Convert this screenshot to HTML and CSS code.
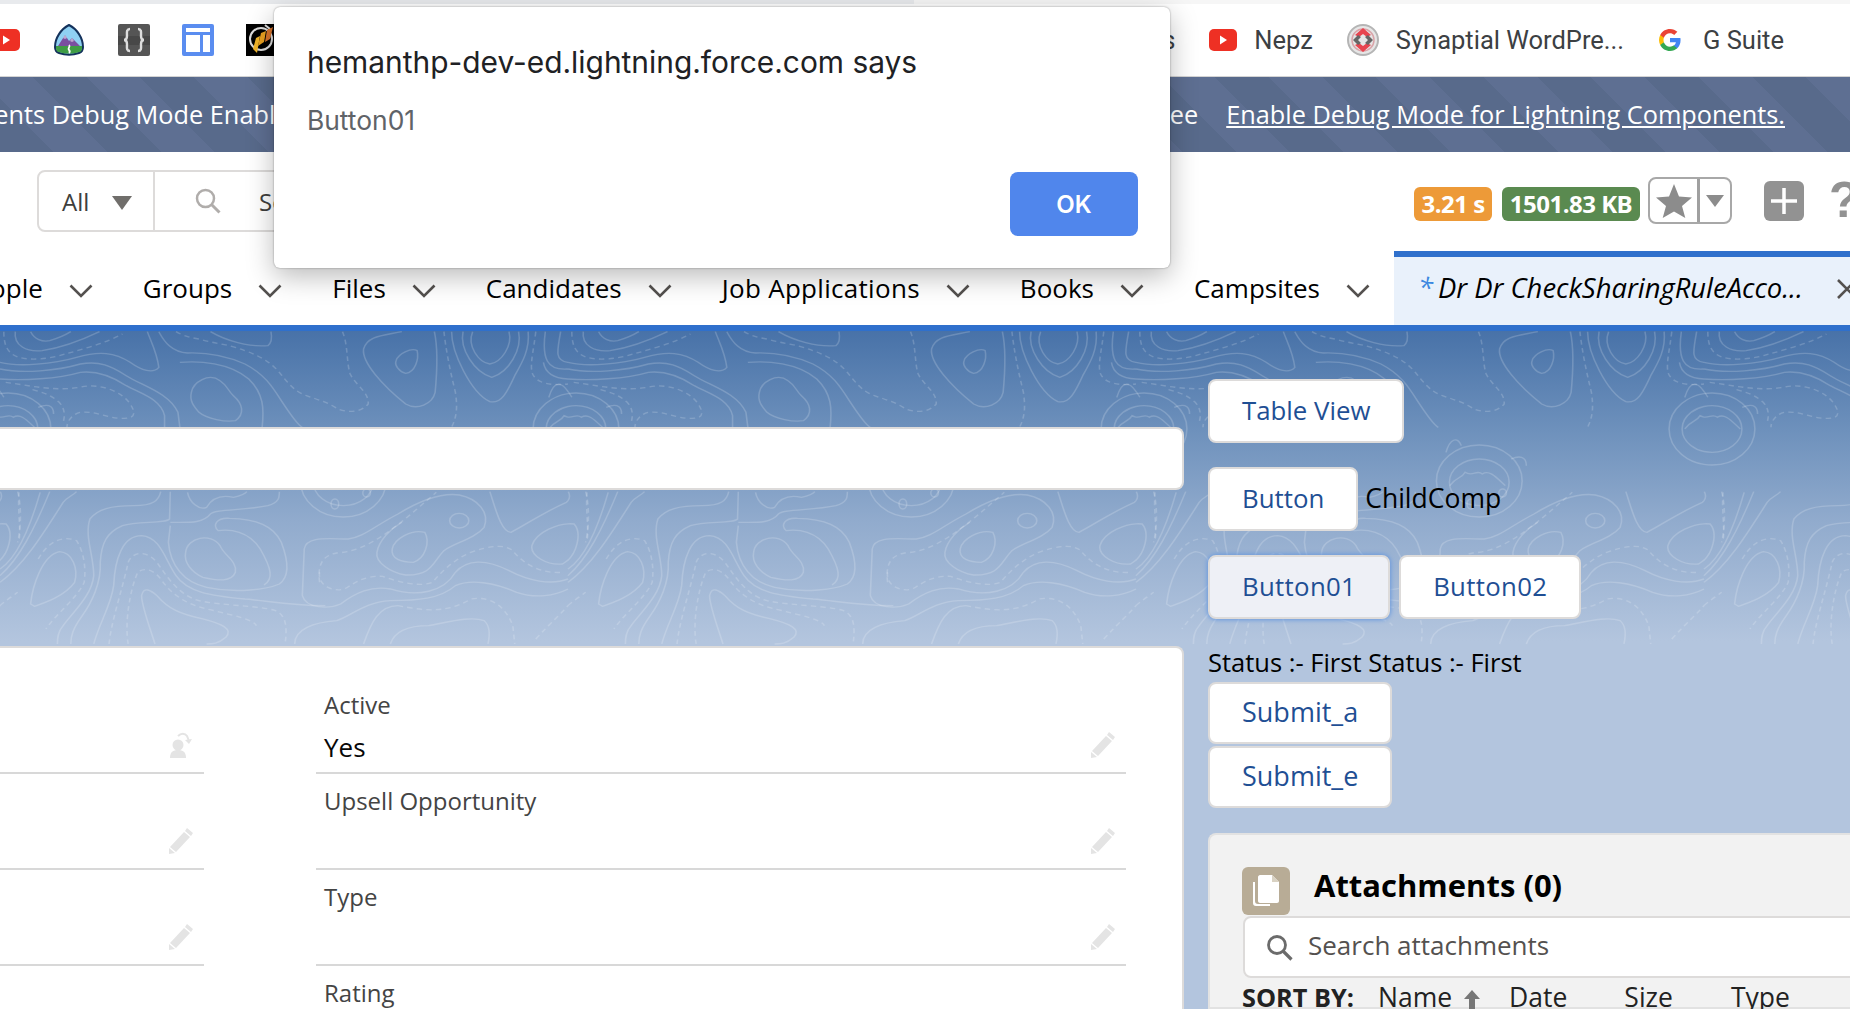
FILE: index.html
```html
<!DOCTYPE html>
<html>
<head>
<meta charset="utf-8">
<title>Lightning</title>
<link rel="stylesheet" href="styles.css">
</head>
<body>

<div class="tabstrip"><div class="tabstrip-on"></div></div>

<div class="bookmarks">
  <div class="bm-left">
    <svg class="ic-yt-cut" width="28" height="22" viewBox="0 0 28 22"><rect width="28" height="22" rx="5" fill="#ee3024"/><path d="M11 6.5l7 4.500-7 4.500z" fill="#fff"/></svg>
    <svg width="30" height="32" viewBox="0 0 30 32"><path d="M15 1C7 5 1 14 1 23c0 3 1 5 4 6 6 2 14 2 20 0 3-1 4-3 4-6C29 14 23 5 15 1z" fill="#8fd0f3" stroke="#14325c" stroke-width="2"/><path d="M4 22l7-11 4 6 3-3 8 8z" fill="#7a4fa0"/><path d="M11 11l2 3-2 1-2-1zM18 14l2 3-2 1-2-1z" fill="#fff" opacity=".5"/><path d="M2 22h26v2c0 2-1 4-3 4-6 2-14 2-20 0-2 0-3-2-3-4z" fill="#3f9c45"/><path d="M15 21c2 2-2 3 0 5 1 1 1 2 0 3" fill="none" stroke="#fff" stroke-width="1.800"/></svg>
    <svg width="32" height="32" viewBox="0 0 32 32"><rect width="32" height="32" rx="2" fill="#555"/><path d="M0 12h32v9H0z" fill="#484848"/><path d="M12 5c-4 0-3 4-3 7 0 2-1 4-3 4 2 0 3 2 3 4 0 3-1 7 3 7M20 5c4 0 3 4 3 7 0 2 1 4 3 4-2 0-3 2-3 4 0 3 1 7-3 7" fill="none" stroke="#ddd" stroke-width="2.400"/></svg>
    <svg width="32" height="32" viewBox="0 0 32 32"><rect width="32" height="32" rx="2" fill="#5a8df0"/><path d="M4 4h24v4H4zM4 11h14v17H4zM21 11h7v17h-7z" fill="#fff"/></svg>
    <svg width="28" height="32" viewBox="0 0 28 32"><rect width="28" height="32" fill="#000"/><circle cx="15" cy="15" r="11" fill="none" stroke="#ddd" stroke-width="2"/><path d="M19 1l5 4" stroke="#ddd" stroke-width="2"/><path d="M7 25l3-11 4-2-3 17z" fill="#f0b429"/><path d="M12 22l3-13 5-2-2 11z" fill="#e8a020"/><path d="M19 18l2-12 6-3-3 12z" fill="#d9742c"/></svg>
  </div>
  <div class="bm-right">
    <span class="bm-link">Apex Docs</span>
    <span class="bm-item">
      <svg width="28" height="22" viewBox="0 0 28 22"><rect width="28" height="22" rx="5" fill="#ee3024"/><path d="M11 6.500l7 4.500-7 4.500z" fill="#fff"/></svg>
      <span class="bm-link">Nepz</span>
    </span>
    <span class="bm-item">
      <svg width="32" height="32" viewBox="0 0 32 32"><circle cx="16" cy="16" r="15" fill="#e6e6e6" stroke="#b5b5b5" stroke-width="2"/><circle cx="16" cy="16" r="11" fill="none" stroke="#d9a3a8" stroke-width="1.500"/><path d="M8 11l8-7 8 7-4 2-4-3-4 3z" fill="#e8444f"/><path d="M8 21l8 7 8-7-4-2-4 3-4-3z" fill="#e8444f"/><path d="M6 16l5-5 3 2-3 3 3 3-3 2zM26 16l-5-5-3 2 3 3-3 3 3 2z" fill="#666"/></svg>
      <span class="bm-link">Synaptial WordPre...</span>
    </span>
    <span class="bm-item bm-item-g">
      <svg width="24" height="24" viewBox="0 0 48 48"><path fill="#4285F4" d="M45.100 24.500c0-1.600-.1-3.100-.4-4.500H24v8.500h11.800c-.5 2.800-2.100 5.100-4.400 6.700v5.500h7.100c4.200-3.800 6.600-9.500 6.600-16.200z"/><path fill="#34A853" d="M24 46c5.900 0 10.900-2 14.500-5.300l-7.100-5.500c-2 1.300-4.500 2.100-7.400 2.100-5.700 0-10.500-3.800-12.300-9H4.400v5.700C8 41.400 15.400 46 24 46z"/><path fill="#FBBC05" d="M11.700 28.300c-.4-1.300-.7-2.800-.7-4.300s.3-3 .7-4.300v-5.700H4.400C2.900 17 2 20.400 2 24s.9 7 2.400 10z"/><path fill="#EA4335" d="M24 10.700c3.200 0 6.100 1.100 8.400 3.300l6.300-6.300C34.900 4.200 29.900 2 24 2 15.400 2 8 6.600 4.400 14l7.300 5.700c1.800-5.200 6.600-9 12.300-9z"/></svg>
      <span class="bm-link">G Suite</span>
    </span>
  </div>
</div>

<div class="banner">
  <div class="banner-cut"><span>Lightning Components Debug Mode Enabled</span></div>
  <div class="banner-end">
    <span>To turn it off, see</span>
    <a class="banner-link">Enable Debug Mode for Lightning Components.</a>
  </div>
</div>

<div class="globalhead">
  <div class="searchbox">
    <div class="searchscope">
      <span>All</span>
      <svg width="20" height="14" viewBox="0 0 20 14"><path d="M0 0h20L10 14z" fill="#706e6b"/></svg>
    </div>
    <div class="searchfield">
      <svg width="26" height="26" viewBox="0 0 26 26"><circle cx="10.500" cy="10.500" r="8.500" fill="none" stroke="#b0adab" stroke-width="2.500"/><path d="M16.500 16.500l8 8" stroke="#b0adab" stroke-width="3"/></svg>
      <span>Search Salesforce</span>
    </div>
  </div>
  <div class="headtools">
    <span class="badge badge-time">3.21 s</span>
    <span class="badge badge-size">1501.83 KB</span>
    <div class="favs">
      <div class="favs-star"><svg width="36" height="34" viewBox="0 0 36 34"><path d="M18 0l5 12.500 13 1-10 8.500 3.300 12L18 27.500 6.700 34 10 22 0 13.500l13-1z" fill="#8c8c8c"/></svg></div>
      <div class="favs-drop"><svg width="18" height="12" viewBox="0 0 18 12"><path d="M0 0h18L9 12z" fill="#8c8c8c"/></svg></div>
    </div>
    <div class="addbtn"><svg width="28" height="28" viewBox="0 0 28 28"><path d="M14 1v26M1 14h26" stroke="#fff" stroke-width="3.500"/></svg></div>
    <span class="helpmark">?</span>
  </div>
</div>

<div class="navbar">
  <div class="navlist">
    <div class="navitem"><span>People</span><svg class="chev" width="24" height="14" viewBox="0 0 24 14"><path d="M1.500 1.500L12 12 22.500 1.500" fill="none" stroke="#54514f" stroke-width="2.600"/></svg></div>
    <div class="navitem"><span>Groups</span><svg class="chev" width="24" height="14" viewBox="0 0 24 14"><path d="M1.500 1.500L12 12 22.500 1.500" fill="none" stroke="#54514f" stroke-width="2.600"/></svg></div>
    <div class="navitem"><span>Files</span><svg class="chev" width="24" height="14" viewBox="0 0 24 14"><path d="M1.500 1.500L12 12 22.500 1.500" fill="none" stroke="#54514f" stroke-width="2.600"/></svg></div>
    <div class="navitem"><span>Candidates</span><svg class="chev" width="24" height="14" viewBox="0 0 24 14"><path d="M1.500 1.500L12 12 22.500 1.500" fill="none" stroke="#54514f" stroke-width="2.600"/></svg></div>
    <div class="navitem navitem-wide"><span>Job Applications</span><svg class="chev" width="24" height="14" viewBox="0 0 24 14"><path d="M1.500 1.500L12 12 22.500 1.500" fill="none" stroke="#54514f" stroke-width="2.600"/></svg></div>
    <div class="navitem"><span>Books</span><svg class="chev" width="24" height="14" viewBox="0 0 24 14"><path d="M1.500 1.500L12 12 22.500 1.500" fill="none" stroke="#54514f" stroke-width="2.600"/></svg></div>
    <div class="navitem"><span>Campsites</span><svg class="chev" width="24" height="14" viewBox="0 0 24 14"><path d="M1.500 1.500L12 12 22.500 1.500" fill="none" stroke="#54514f" stroke-width="2.600"/></svg></div>
  </div>
  <div class="navactive">
    <span class="navstar">*</span>
    <span class="navtitle">Dr Dr CheckSharingRuleAcco...</span>
    <svg class="navclose" width="22" height="22" viewBox="0 0 22 22"><path d="M2 2l18 18M20 2L2 20" stroke="#54514f" stroke-width="2.600"/></svg>
  </div>
</div>

<div class="workspace">
  <svg class="topo" width="1850" height="315" xmlns="http://www.w3.org/2000/svg">
    <defs>
      <g id="topo-lines" fill="none" stroke="#fff" stroke-opacity=".18" stroke-width="4">
        <g>
          <path d="M1035 95C1040 75 1075 55 1090 65C1095 90 1085 130 1060 133C1045 130 1030 110 1035 95Z"/>
          <path d="M1050 8C1000 20 960 20 950 60C945 100 1000 170 1060 225C1090 245 1130 225 1137 190C1142 130 1145 60 1135 8"/>
          <path d="M415 8C430 40 450 70 490 72C540 70 590 80 640 105C690 135 710 170 735 215C755 250 780 290 790 295"/>
          <path d="M550 8C590 35 650 55 700 50C712 40 710 20 708 8"/>
          <path d="M0 100C50 115 140 105 200 85C260 65 300 70 340 100C370 125 400 135 415 115C410 70 395 40 385 8"/>
          <path d="M0 120C60 135 150 125 210 105C260 95 290 110 330 140C370 170 440 190 465 250L470 295"/>
          <path d="M0 150C60 155 150 150 210 130C250 125 290 140 330 170C370 195 420 210 430 260L430 295"/>
          <path d="M500 190C505 160 545 130 575 155C595 170 595 185 610 200C635 225 640 255 615 275C590 280 540 270 520 250C505 230 495 215 500 190Z"/>
          <path d="M470 100C520 95 600 100 650 150C690 195 690 240 685 295"/>
          <path d="M1235 8C1220 50 1250 100 1280 105C1310 100 1340 50 1330 8"/>
          <path d="M1210 8C1200 60 1240 130 1285 145C1330 130 1365 60 1355 8"/>
          <path d="M1180 8C1180 70 1230 190 1280 218C1310 225 1325 190 1345 140C1365 100 1385 60 1380 8"/>
          <path d="M1465 8C1455 70 1450 95 1484 100M1425 8C1415 90 1430 125 1484 120M1420 100C1425 135 1450 148 1484 150"/>
          <path d="M40 8C35 50 70 70 110 65C170 55 220 30 260 8M80 8C90 30 110 40 130 35C160 25 175 15 185 8"/>
          <path d="M485 670C490 625 550 610 575 650C585 680 620 695 615 730C605 760 570 755 530 745C500 730 480 700 485 670Z"/>
          <path d="M445 590L440 640C445 710 480 760 540 775C620 795 700 780 730 765C755 745 755 700 735 640C715 590 670 570 600 568C565 565 555 590 570 605C600 600 650 605 680 660C710 720 715 750 690 768"/>
          <path d="M445 580C490 580 530 585 550 555C560 540 640 545 700 530C730 520 730 505 730 488"/>
          <path d="M490 490C495 520 520 545 540 535C550 515 570 495 610 505C630 500 640 495 645 488"/>
          <path d="M445 488L443 570C430 585 360 575 320 590C280 610 265 640 262 700C265 760 240 820 215 860C190 900 185 920 185 945"/>
          <path d="M420 488C415 515 400 530 350 530C290 530 255 540 235 570C220 620 245 680 245 740C240 800 190 850 165 890C150 910 150 930 150 945"/>
          <path d="M245 945C260 880 290 830 297 770C300 690 320 620 370 620C420 625 430 690 460 740C490 790 550 800 640 810C700 815 750 830 850 830"/>
          <path d="M405 945C390 890 370 830 370 800C375 770 395 785 410 800C440 840 470 855 530 870C580 885 610 900 590 925C570 945 555 945 540 945"/>
          <path d="M80 825C85 770 110 680 155 668C190 670 205 720 195 760C170 800 120 820 90 832Z"/>
          <path d="M0 720C40 690 75 610 105 490M0 740C50 690 90 600 130 488M0 760C60 710 110 620 165 520C175 505 190 500 200 488"/>
          <path d="M790 800L795 660C800 620 860 630 910 630C950 625 980 590 1040 555C1090 520 1150 490 1200 498C1250 510 1280 550 1265 595C1240 630 1190 640 1160 665C1130 700 1130 740 1060 738C1020 730 980 700 985 670C990 635 1020 600 1050 580"/>
          <path d="M1025 660C1030 630 1075 600 1110 610C1125 640 1110 690 1080 700C1050 700 1020 690 1025 660Z"/>
          <ellipse cx="1200" cy="575" rx="25" ry="22"/>
          <path d="M1390 650C1400 610 1460 580 1500 585C1520 610 1510 680 1470 705C1430 710 1385 680 1390 650Z"/>
          <path d="M1280 488C1295 540 1310 610 1335 610C1370 590 1420 550 1480 520C1490 510 1490 500 1485 488"/>
          <path d="M790 800C800 840 860 840 890 825C930 790 970 770 1020 780C1090 805 1160 790 1190 730C1220 690 1270 690 1330 725C1380 755 1440 770 1484 750"/>
          <path d="M770 945C770 900 820 880 880 875C920 860 950 820 1020 815C1090 815 1150 810 1190 770C1230 750 1290 760 1350 790C1400 810 1450 800 1484 780"/>
          <path d="M1020 945C1030 910 1060 890 1120 890C1170 880 1230 860 1265 875C1280 890 1280 920 1275 945"/>
          <path d="M950 945C970 880 990 830 1040 830"/>
          <ellipse cx="897" cy="456" rx="112" ry="108"/>
          <ellipse cx="897" cy="460" rx="78" ry="70"/>
          <path d="M820 470C840 440 850 450 860 430C880 445 890 420 905 435C925 420 945 450 965 470"/>
          <ellipse cx="875" cy="525" rx="10" ry="15"/>
          <ellipse cx="958" cy="492" rx="10" ry="12"/>
          <path d="M810 370C820 330 840 320 850 350M980 390C1000 380 1020 380 1020 410"/>
          <ellipse cx="21" cy="300" rx="112" ry="108"/>
          <ellipse cx="21" cy="300" rx="78" ry="70"/>
          <path d="M-50 300C-30 270 -20 280 -10 260C10 275 20 250 35 265C55 250 75 280 95 300"/>
          <path d="M-50 205C-35 150 -15 155 10 205M100 235C120 225 140 225 140 255"/>
        </g>
        <g stroke-dasharray="14 11">
          <path d="M895 8C910 50 905 100 915 135C930 170 965 190 962 225C940 255 900 250 880 238C850 215 820 210 790 195C770 185 750 160 730 130C700 90 660 70 600 50C580 45 550 40 520 30C490 25 470 15 460 8"/>
          <path d="M15 160C80 170 150 190 220 172C270 165 320 190 340 225C355 250 355 270 320 268C280 268 250 245 210 250C190 255 175 275 175 295"/>
          <path d="M85 182C110 190 130 195 155 220C170 240 170 260 165 280"/>
          <path d="M1160 8C1165 60 1175 120 1190 190C1195 230 1195 260 1180 295"/>
          <path d="M1400 8C1395 60 1385 100 1390 130C1400 165 1440 170 1484 165"/>
          <path d="M10 8C10 50 20 75 50 85C80 95 130 90 170 75C220 60 280 40 320 15"/>
          <path d="M285 945C290 880 320 780 335 700C345 670 380 660 410 700C440 750 470 800 520 815C580 830 680 830 720 845C750 860 750 900 745 945"/>
          <path d="M335 945C325 880 340 780 360 730C375 715 400 720 420 750C450 800 490 830 560 845C610 860 660 870 670 890"/>
          <path d="M50 490C45 530 55 610 50 630M100 690C130 630 170 620 200 635C220 670 225 720 220 760C200 810 150 850 120 900"/>
          <path d="M835 760C830 710 840 680 880 672C920 670 960 650 1000 620C1040 590 1090 540 1140 490"/>
          <path d="M835 730C830 770 870 790 900 780C930 760 950 740 1000 742C1040 760 1100 775 1130 760C1160 720 1190 690 1230 670C1280 650 1320 645 1340 665C1370 710 1420 735 1470 730"/>
          <path d="M1040 830C1090 840 1160 860 1230 810C1280 800 1320 830 1340 890L1345 945"/>
          <path d="M1400 930C1440 880 1470 850 1484 830M0 830C20 810 35 800 46 790M46 488C56 530 56 590 46 640"/>
        </g>
      </g>
      <pattern id="topo-tile" width="568" height="400" patternUnits="userSpaceOnUse">
        <g transform="translate(0,-2) scale(.3827 .3333)">
          <use href="#topo-lines"/>
          <use href="#topo-lines" x="1484"/>
          <use href="#topo-lines" x="-1484"/>
        </g>
      </pattern>
    </defs>
    <rect width="1850" height="315" fill="url(#topo-tile)"/>
  </svg>

  <div class="mainpane">
    <div class="whitebar"></div>
    <div class="recordcard">
      <div class="fieldgrid">
        <div class="field"><div class="field-label">&nbsp;</div><div class="field-row"><span class="field-value"></span>
          <svg class="editicon" width="24" height="27" viewBox="0 0 24 27"><circle cx="9" cy="14" r="5.500" fill="#e4e4e4"/><path d="M1 27c0-6 3-8 8-8s8 2 8 8z" fill="#e4e4e4"/><path d="M9 5c3-3 7-3 9 0l2 5" fill="none" stroke="#e4e4e4" stroke-width="2"/><path d="M16 9l4 4 3-5z" fill="#e4e4e4"/></svg></div></div>
        <div class="field"><div class="field-label">Active</div><div class="field-row"><span class="field-value">Yes</span>
          <svg class="editicon" width="24" height="26" viewBox="0 0 24 26"><path d="M18 0l6 5-2 3-6-5zM15 4l6 5L7 24 1 19zM0 20l6 5-6 1z" fill="#e4e4e4"/></svg></div></div>
        <div class="field"><div class="field-label">&nbsp;</div><div class="field-row"><span class="field-value"></span>
          <svg class="editicon" width="24" height="26" viewBox="0 0 24 26"><path d="M18 0l6 5-2 3-6-5zM15 4l6 5L7 24 1 19zM0 20l6 5-6 1z" fill="#e4e4e4"/></svg></div></div>
        <div class="field"><div class="field-label">Upsell Opportunity</div><div class="field-row"><span class="field-value"></span>
          <svg class="editicon" width="24" height="26" viewBox="0 0 24 26"><path d="M18 0l6 5-2 3-6-5zM15 4l6 5L7 24 1 19zM0 20l6 5-6 1z" fill="#e4e4e4"/></svg></div></div>
        <div class="field"><div class="field-label">&nbsp;</div><div class="field-row"><span class="field-value"></span>
          <svg class="editicon" width="24" height="26" viewBox="0 0 24 26"><path d="M18 0l6 5-2 3-6-5zM15 4l6 5L7 24 1 19zM0 20l6 5-6 1z" fill="#e4e4e4"/></svg></div></div>
        <div class="field"><div class="field-label">Type</div><div class="field-row"><span class="field-value"></span>
          <svg class="editicon" width="24" height="26" viewBox="0 0 24 26"><path d="M18 0l6 5-2 3-6-5zM15 4l6 5L7 24 1 19zM0 20l6 5-6 1z" fill="#e4e4e4"/></svg></div></div>
        <div class="field field-last"><div class="field-label">&nbsp;</div></div>
        <div class="field field-last"><div class="field-label">Rating</div></div>
      </div>
    </div>
  </div>

  <div class="sidepane">
    <div class="btnrow btnrow-first"><button class="sfbtn">Table View</button></div>
    <div class="btnrow"><button class="sfbtn">Button</button><span class="childlabel">ChildComp</span></div>
    <div class="btnrow"><button class="sfbtn sfbtn-num sfbtn-focus">Button01</button><button class="sfbtn sfbtn-num">Button02</button></div>
    <div class="statusline">Status :- First Status :- First</div>
    <button class="sfbtn sfbtn-submit">Submit_a</button>
    <button class="sfbtn sfbtn-submit sfbtn-submit2">Submit_e</button>

    <div class="attachcard">
      <div class="attachhead">
        <div class="attachicon"><svg width="32" height="36" viewBox="0 0 32 36"><path d="M3 9v21c0 2 1 3 3 3h14v-2H8c-2 0-3-1-3-3V9z" fill="#fff"/><path d="M10 2h12l7 7v19c0 1-1 2-2 2H10c-1 0-2-1-2-2V4c0-1 1-2 2-2z" fill="#fff"/><path d="M22 2v7h7z" fill="#d9d2c3"/></svg></div>
        <span class="attachtitle">Attachments (0)</span>
      </div>
      <div class="attachsearch">
        <svg width="27" height="27" viewBox="0 0 27 27"><circle cx="11" cy="11" r="8.500" fill="none" stroke="#6b6b6b" stroke-width="2.800"/><path d="M17 17l8.500 8.500" stroke="#6b6b6b" stroke-width="3.200"/></svg>
        <span class="attachsearch-text">Search attachments</span>
      </div>
      <div class="sortrow">
        <b>SORT BY:</b>
        <span class="sort-name">Name</span>
        <svg class="sort-arrow" width="18" height="20" viewBox="0 0 18 20"><path d="M9 1L1 10h5v10h6V10h5z" fill="#777"/></svg>
        <span class="sort-date">Date</span>
        <span class="sort-size">Size</span>
        <span>Type</span>
      </div>
    </div>
  </div>
</div>

<div class="alertbox">
  <div class="alert-title">hemanthp-dev-ed.lightning.force.com says</div>
  <div class="alert-msg">Button01</div>
  <div class="alert-foot"><button class="alert-ok">OK</button></div>
</div>

</body>
</html>
```

FILE: styles.css
```css
html, body {
  margin: 0;
  padding: 0;
}
body {
  width: 1850px;
  height: 1010px;
  overflow: hidden;
  position: relative;
  background: #fff;
  font-family: "Open Sans", "Liberation Sans", sans-serif;
  color: #000;
}
button {
  font-family: inherit;
}

/* browser chrome */
.tabstrip {
  height: 4px;
  background: #f6f6f6;
}
.tabstrip-on {
  width: 914px;
  height: 4px;
  background: #e8eaed;
}
.bookmarks {
  height: 73px;
  display: flex;
  justify-content: space-between;
  align-items: center;
  box-sizing: border-box;
  padding-right: 66px;
  border-bottom: 1px solid #d4d4d4;
  font-family: Roboto, sans-serif;
}
.bm-left {
  display: flex;
  align-items: center;
  gap: 32px;
  margin-left: -8px;
}
.bm-left svg:nth-child(2) {
  margin-left: 2px;
  margin-right: 2px;
}
.bm-right {
  display: flex;
  align-items: center;
  gap: 34px;
}
.bm-item {
  display: flex;
  align-items: center;
  gap: 17px;
}
.bm-item-g {
  gap: 21px;
}
.bm-link {
  font-size: 25.5px;
  color: #3c4043;
  white-space: nowrap;
}

/* setup banner */
.banner {
  height: 75px;
  box-sizing: border-box;
  padding-bottom: 2px;
  display: flex;
  justify-content: space-between;
  align-items: center;
  color: #fff;
  font-size: 25.3px;
  background: repeating-linear-gradient(45deg, #586a8b 0 38px, #5e6f92 38px 76px);
}
.banner-cut {
  width: 305px;
  display: flex;
  justify-content: flex-end;
  white-space: nowrap;
  overflow: hidden;
}
.banner-end {
  display: flex;
  gap: 28px;
  padding-right: 65px;
  white-space: nowrap;
}
.banner-link {
  text-decoration: underline;
  text-underline-offset: 2px;
}

/* global header */
.globalhead {
  height: 99px;
  display: flex;
  justify-content: space-between;
}
.searchbox {
  width: 700px;
  height: 62px;
  box-sizing: border-box;
  margin: 18px 0 0 37px;
  display: flex;
  border: 2px solid #dddbda;
  border-radius: 8px;
  font-size: 24px;
  color: #3e3e3c;
}
.searchscope {
  width: 116px;
  display: flex;
  align-items: center;
  gap: 23px;
  padding-left: 23px;
  box-sizing: border-box;
  border-right: 2px solid #dddbda;
}
.searchscope svg {
  margin-top: 4px;
}
.searchfield {
  display: flex;
  align-items: center;
  gap: 38px;
  padding-left: 40px;
}
.headtools {
  display: flex;
  align-items: center;
  align-self: flex-start;
  height: 47px;
  margin-top: 25px;
  width: 436px;
  flex: none;
}
.badge {
  height: 34px;
  margin-top: 7px;
  padding-bottom: 2px;
  box-sizing: border-box;
  display: flex;
  justify-content: center;
  align-items: center;
  border-radius: 6px;
  color: #fff;
  font-weight: 700;
  font-size: 24px;
  letter-spacing: -0.5px;
  flex: none;
}
.badge-time {
  width: 78px;
  background: #ed9a38;
  margin-right: 10px;
}
.badge-size {
  width: 138px;
  background: #5a8a50;
  margin-right: 8px;
}
.favs {
  width: 84px;
  height: 47px;
  box-sizing: border-box;
  display: flex;
  flex: none;
  border: 2px solid #a8a8a8;
  border-radius: 8px;
  margin-right: 32px;
}
.favs-star {
  width: 47px;
  display: flex;
  align-items: center;
  justify-content: center;
  border-right: 3px solid #a0a0a0;
}
.favs-drop {
  flex: 1;
  display: flex;
  align-items: center;
  justify-content: center;
}
.addbtn {
  width: 40px;
  height: 40px;
  flex: none;
  display: flex;
  align-items: center;
  justify-content: center;
  background: #929292;
  border-radius: 6px;
  margin-right: 25px;
}
.helpmark {
  font-size: 50px;
  font-weight: 700;
  color: #929292;
  line-height: 47px;
  font-family: "Liberation Sans", sans-serif;
}

/* tabs */
.navbar {
  height: 80px;
  box-sizing: border-box;
  display: flex;
  border-bottom: 6px solid #2f70cc;
  font-size: 26px;
}
.navlist {
  flex: 1;
  min-width: 0;
  overflow: hidden;
  display: flex;
  justify-content: flex-end;
  padding-right: 24px;
}
.navitem {
  display: flex;
  align-items: center;
  gap: 26px;
  flex: none;
  margin-left: 50px;
}
.navitem-wide {
  letter-spacing: .3px;
}
.chev {
  margin-top: 5px;
}
.navactive {
  width: 456px;
  flex: none;
  box-sizing: border-box;
  display: flex;
  align-items: center;
  background: #e9f1fb;
  border-top: 6px solid #2f70cc;
  padding-left: 24px;
  padding-bottom: 7px;
  overflow: hidden;
  white-space: nowrap;
  font-style: italic;
  font-size: 27.4px;
}
.navstar {
  color: #3b87e0;
  margin-right: 5px;
}
.navclose {
  flex: none;
  margin-left: 33px;
  margin-top: 3px;
}

/* page body */
.workspace {
  position: relative;
  height: 678px;
  display: flex;
  overflow: hidden;
  background: linear-gradient(#4872a8 0, #6e91bc 100px, #91abcd 190px, #b3c5de 310px);
}
.topo {
  position: absolute;
  left: 0;
  top: 0;
}
.mainpane {
  position: relative;
  width: 1184px;
  flex: none;
  display: flex;
  flex-direction: column;
  padding-top: 96px;
  box-sizing: border-box;
}
.whitebar {
  height: 63px;
  flex: none;
  box-sizing: border-box;
  background: #fff;
  border: 2px solid #dddbda;
  border-left: 0;
  border-radius: 0 8px 8px 0;
}
.recordcard {
  flex: 1;
  min-height: 0;
  overflow: hidden;
  margin-top: 156px;
  box-sizing: border-box;
  background: #fff;
  border: 2px solid #dddbda;
  border-left: 0;
  border-bottom: 0;
  border-radius: 0 8px 0 0;
  padding-top: 30px;
}
.fieldgrid {
  display: grid;
  grid-template-columns: 204px 810px;
  column-gap: 112px;
}
.field {
  height: 96px;
  box-sizing: border-box;
  border-bottom: 2px solid #d8d8d8;
}
.field-last {
  border-bottom: 0;
}
.field-label {
  padding: 12px 0 0 8px;
  font-size: 24px;
  line-height: 30px;
  color: #444;
}
.field-row {
  display: flex;
  justify-content: space-between;
  align-items: center;
  height: 36px;
  margin-top: 9px;
  padding: 0 11px 0 8px;
}
.field-value {
  font-size: 26px;
  color: #080707;
}
.editicon {
  flex: none;
  margin-bottom: 5px;
}

/* right column */
.sidepane {
  position: relative;
  flex: 1;
  min-width: 0;
  padding: 48px 0 0 24px;
  display: flex;
  flex-direction: column;
  align-items: flex-start;
}
.btnrow {
  display: flex;
  flex: none;
  align-items: center;
  height: 64px;
  margin-top: 24px;
}
.btnrow-first {
  margin-top: 0;
}
.sfbtn {
  height: 64px;
  flex: none;
  padding: 0 32px 2px;
  background: #fff;
  border: 2px solid #dddbda;
  border-radius: 8px;
  color: #1f4f94;
  font-size: 25.8px;
  white-space: nowrap;
}
.sfbtn-num {
  letter-spacing: .3px;
}
.sfbtn-focus {
  background: #eef0f6;
  box-shadow: 0 0 4px 1px #6a9ade;
  margin-right: 9px;
}
.childlabel {
  margin: 0 0 2px 7px;
  font-size: 26.5px;
}
.statusline {
  flex: none;
  margin-top: 24px;
  height: 38px;
  line-height: 38px;
  font-size: 25.5px;
}
.sfbtn-submit {
  height: 62px;
  width: 184px;
  padding: 0 0 4px 32px;
  text-align: left;
  font-size: 27px;
  margin-top: 1px;
}
.sfbtn-submit2 {
  margin-top: 2px;
}
.attachcard {
  margin-top: 25px;
  flex: 1;
  min-height: 0;
  align-self: stretch;
  box-sizing: border-box;
  background: #f2f2f2;
  border: 2px solid #e2e2e2;
  border-right: 0;
  border-radius: 8px 0 0 0;
  padding: 32px 0 0 32px;
}
.attachhead {
  display: flex;
  align-items: flex-start;
  gap: 24px;
}
.attachicon {
  width: 48px;
  height: 48px;
  flex: none;
  background: #b8ac96;
  border-radius: 6px;
  display: flex;
  align-items: center;
  justify-content: center;
}
.attachtitle {
  font-size: 31px;
  font-weight: 700;
  line-height: 36px;
}
.attachsearch {
  height: 62px;
  margin: 1px -20px 0 1px;
  box-sizing: border-box;
  background: #fff;
  border: 2px solid #dddbda;
  border-radius: 8px;
  display: flex;
  align-items: center;
  gap: 15px;
  padding-left: 21px;
  font-size: 26px;
  color: #54514f;
}
.attachsearch-text {
  margin-bottom: 4px;
}
.sortrow {
  display: flex;
  align-items: center;
  height: 38px;
  font-size: 26.5px;
  color: #222;
}
.sortrow b {
  font-size: 25.3px;
  margin-right: 24px;
}
.sort-arrow {
  margin: 4px 0 0 11px;
}
.sort-date {
  margin-left: 28px;
  margin-right: 57px;
}
.sort-size {
  margin-right: 58px;
}

/* js alert */
.alertbox {
  position: absolute;
  left: 274px;
  top: 7px;
  width: 896px;
  height: 261px;
  box-sizing: border-box;
  background: #fff;
  border-radius: 6px;
  box-shadow: 0 0 2px rgba(0, 0, 0, .4), 0 8px 28px rgba(0, 0, 0, .28);
  padding: 36px 32px 0 33px;
  font-family: Inter, Roboto, sans-serif;
}
.alert-title {
  font-size: 29.9px;
  line-height: 38px;
  color: #202124;
}
.alert-msg {
  margin-top: 21px;
  font-size: 26.4px;
  line-height: 36px;
  color: #5f6368;
}
.alert-foot {
  display: flex;
  justify-content: flex-end;
  margin-top: 34px;
}
.alert-ok {
  width: 128px;
  height: 64px;
  border: 0;
  border-radius: 8px;
  background: #5086ec;
  color: #fff;
  font-size: 24px;
  font-weight: 600;
}
```
